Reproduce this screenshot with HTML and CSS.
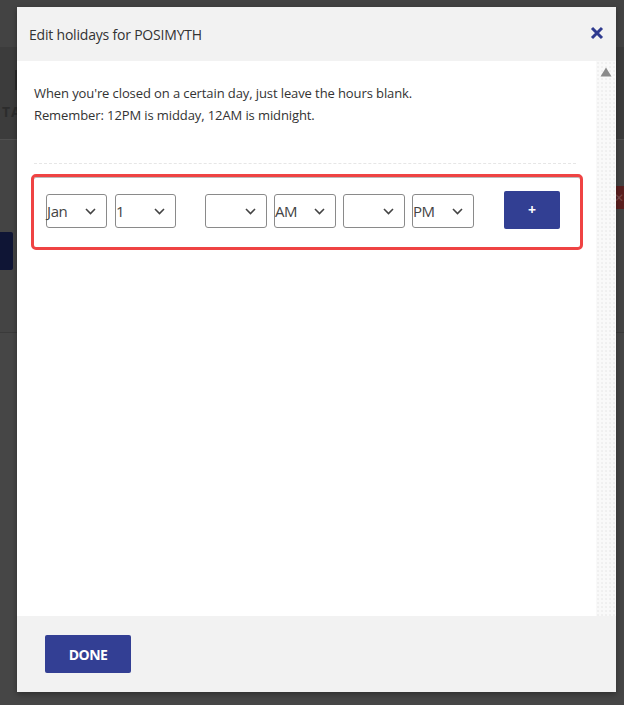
FILE: index.html
```html
<!DOCTYPE html>
<html>
<head>
<meta charset="utf-8">
<link rel="stylesheet" href="styles.css">
</head>
<body>
<div class="page">
  <div class="band-top"></div>
  <div class="band-head"><span class="bar"></span><span class="ta">TA</span></div>
  <div class="band-mid">
    <div class="ghost-x">✕</div>
    <div class="ghost-btn"></div>
  </div>
  <div class="band-low"></div>
</div>

<div class="modal">
  <div class="modal-head">
    <span class="title">Edit holidays for POSIMYTH</span>
    <svg class="close" width="14" height="14" viewBox="0 0 14 14"><path d="M2 2L12 12M12 2L2 12" stroke="#2f3b8f" stroke-width="3" stroke-linecap="butt"/></svg>
  </div>
  <div class="modal-body">
    <div class="content">
      <p class="intro">When you're closed on a certain day, just leave the hours blank.<br>Remember: 12PM is midday, 12AM is midnight.</p>
      <div class="divider"></div>
      <div class="row">
        <div class="group g1">
          <div class="sel narrow"><span>Jan</span><svg width="11" height="7" viewBox="0 0 11 7"><path d="M1 1L5.5 5.5L10 1" fill="none" stroke="#444" stroke-width="1.6"/></svg></div>
          <div class="sel narrow"><span>1</span><svg width="11" height="7" viewBox="0 0 11 7"><path d="M1 1L5.5 5.5L10 1" fill="none" stroke="#444" stroke-width="1.6"/></svg></div>
        </div>
        <div class="group g2">
          <div class="sel"><span></span><svg width="11" height="7" viewBox="0 0 11 7"><path d="M1 1L5.5 5.5L10 1" fill="none" stroke="#444" stroke-width="1.6"/></svg></div>
          <div class="sel"><span>AM</span><svg width="11" height="7" viewBox="0 0 11 7"><path d="M1 1L5.5 5.5L10 1" fill="none" stroke="#444" stroke-width="1.6"/></svg></div>
          <div class="sel"><span></span><svg width="11" height="7" viewBox="0 0 11 7"><path d="M1 1L5.5 5.5L10 1" fill="none" stroke="#444" stroke-width="1.6"/></svg></div>
          <div class="sel"><span>PM</span><svg width="11" height="7" viewBox="0 0 11 7"><path d="M1 1L5.5 5.5L10 1" fill="none" stroke="#444" stroke-width="1.6"/></svg></div>
        </div>
        <button class="add">+</button>
      </div>
    </div>
    <div class="scroll">
      <svg width="12" height="10" viewBox="0 0 12 10"><path d="M6 0.5L11.5 9.5H0.5Z" fill="#8a8a8a"/></svg>
    </div>
  </div>
  <div class="modal-foot">
    <button class="done">DONE</button>
  </div>
</div>
</body>
</html>
```
FILE: styles.css
```css
* { box-sizing: border-box; }
html, body { margin: 0; padding: 0; }
body {
  width: 624px;
  height: 705px;
  overflow: hidden;
  background: #444444;
  font-family: "Open Sans", "Noto Sans", sans-serif;
  position: relative;
}
.page { display: flex; flex-direction: column; height: 705px; }
.band-top { height: 47px; background: #434343; }
.band-head {
  height: 93px;
  background: #3c3c3c;
  border-bottom: 1px solid #505050;
  padding-left: 2px;
  display: flex;
  flex-direction: column;
}
.bar { display: block; width: 3px; height: 20px; background: #2a2a2a; margin: 23px 0 0 13px; }
.ta { color: #2c2c2c; font-weight: 700; font-size: 14px; margin-top: 12px; letter-spacing: 1px; }
.band-mid {
  height: 193px;
  background: #444444;
  border-bottom: 1px solid #3a3a3a;
  display: flex;
  flex-direction: column;
}
.ghost-x {
  align-self: flex-end;
  width: 10px; height: 23px;
  margin-top: 46px;
  background: #5b1f1f;
  color: #7a4a4a;
  font-size: 12px;
  line-height: 23px;
}
.ghost-btn { width: 13px; height: 38px; background: #0f1535; margin-top: 23px; border-radius: 0 2px 2px 0; }
.band-low { flex: 1; background: #464646; }

.modal {
  position: absolute;
  left: 17px;
  top: 7px;
  width: 599px;
  height: 685px;
  display: flex;
  flex-direction: column;
  background: #fff;
  box-shadow: 0 2px 6px rgba(0,0,0,0.35);
}
.modal-head {
  height: 54px;
  background: #f2f2f2;
  display: flex;
  align-items: center;
  justify-content: space-between;
  padding: 0 12px 0 12px;
}
.title { font-size: 14px; color: #333; letter-spacing: -0.2px; }
.close { margin-top: -3px; }
.modal-body { flex: 1; display: flex; background: #fff; }
.content { flex: 1; padding: 21px 13px 0 14px; }
.intro {
  margin: 0 0 0 3px;
  font-size: 13px;
  line-height: 22px;
  color: #333;
  letter-spacing: -0.1px;
}
.divider { margin: 37px 7px 0 3px; border-top: 1px dashed #e6e6e6; }
.row {
  margin-top: 10px;
  height: 76px;
  border: 3px solid #ef4343;
  border-radius: 5px;
  display: flex;
  align-items: center;
  padding: 0 0 2px 12px;
  box-shadow: inset 0 1px 0 #bbb;
}
.group { display: flex; gap: 7px; }
.g1 { gap: 8px; }
.g2 { margin-left: 29px; gap: 7px; }
.sel {
  width: 62px;
  height: 34px;
  border: 1px solid #8a8a8a;
  border-radius: 3px;
  display: flex;
  align-items: center;
  justify-content: space-between;
  padding: 0 10px 0 0;
  background: #fff;
  font-family: "Open Sans", "Noto Sans", sans-serif;
  font-size: 15px;
  color: #444;
}
.sel.narrow { width: 61px; }
.sel span { letter-spacing: -0.4px; }
.add {
  margin-left: 30px;
  width: 56px;
  height: 38px;
  border: none;
  border-radius: 2px;
  background: #323f93;
  color: #fff;
  font-family: "Open Sans", sans-serif;
  font-weight: 700;
  font-size: 14px;
  padding: 0;
  margin-top: -3px;
}
.scroll {
  width: 20px;
  background-color: #f9f9f9;
  background-image: radial-gradient(#e4e4e4 0.6px, transparent 0.8px);
  background-size: 4px 4px;
  display: flex;
  justify-content: center;
  padding-top: 6px;
}
.scroll svg { display: block; }
.modal-foot {
  height: 76px;
  background: #f2f2f2;
  padding: 19px 0 0 28px;
}
.done {
  width: 86px;
  height: 38px;
  border: none;
  border-radius: 2px;
  background: #333f94;
  color: #fff;
  font-family: "Open Sans", sans-serif;
  font-weight: 700;
  font-size: 14px;
  letter-spacing: -0.5px;
  padding: 0;
}
```
